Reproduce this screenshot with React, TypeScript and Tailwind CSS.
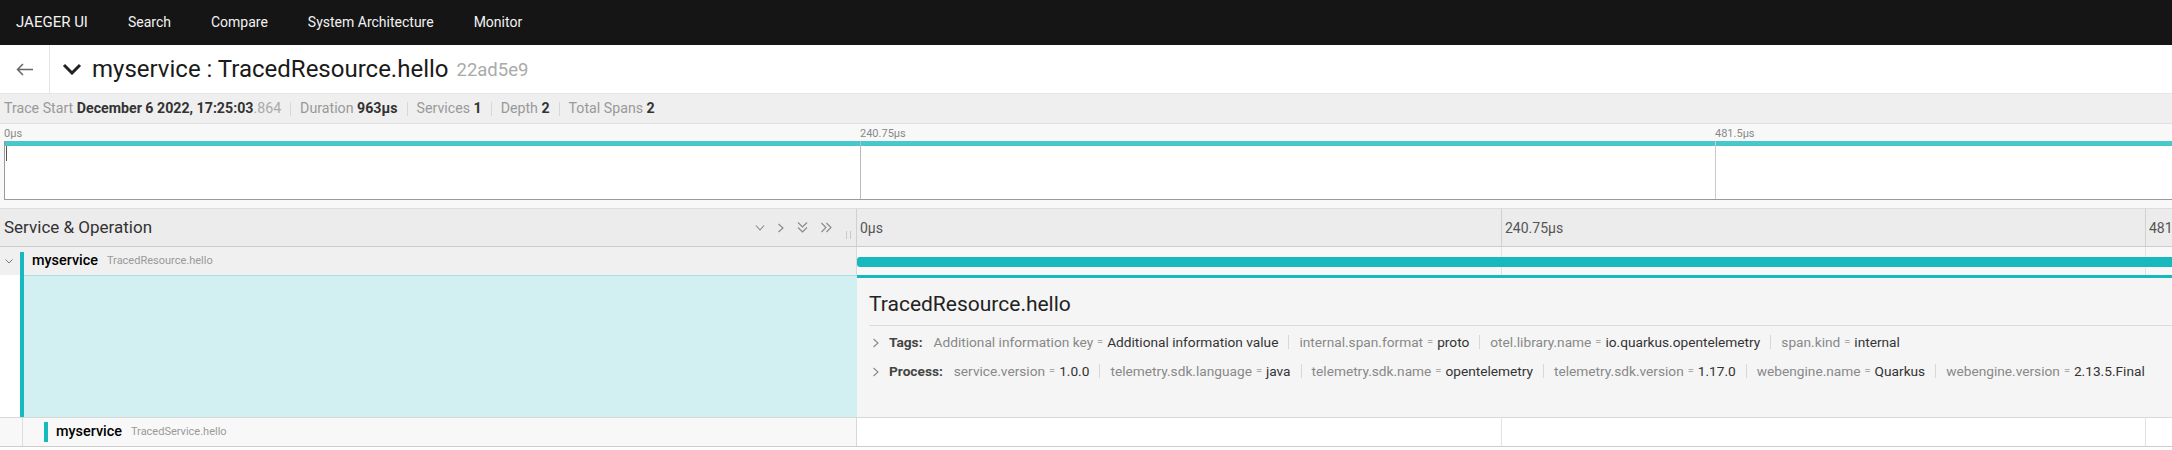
import React from "react";

const navItems = ["Search", "Compare", "System Architecture", "Monitor"];

const tags: [string, string][] = [
  ["Additional information key", "Additional information value"],
  ["internal.span.format", "proto"],
  ["otel.library.name", "io.quarkus.opentelemetry"],
  ["span.kind", "internal"],
];

const process: [string, string][] = [
  ["service.version", "1.0.0"],
  ["telemetry.sdk.language", "java"],
  ["telemetry.sdk.name", "opentelemetry"],
  ["telemetry.sdk.version", "1.17.0"],
  ["webengine.name", "Quarkus"],
  ["webengine.version", "2.13.5.Final"],
];

const Down = ({ className = "" }: { className?: string }) => (
  <svg width="10" height="6" viewBox="0 0 10 6" className={className} fill="none" stroke="currentColor" strokeWidth="1.1">
    <polyline points="1,0.5 5,5 9,0.5" />
  </svg>
);

const Right = ({ className = "" }: { className?: string }) => (
  <svg width="6" height="10" viewBox="0 0 6 10" className={className} fill="none" stroke="currentColor" strokeWidth="1.1">
    <polyline points="0.5,1 5,5 0.5,9" />
  </svg>
);

const DoubleDown = () => (
  <svg width="11" height="11" viewBox="0 0 11 11" fill="none" stroke="currentColor" strokeWidth="1.1">
    <polyline points="1,0.5 5.5,5 10,0.5" />
    <polyline points="1,5.5 5.5,10 10,5.5" />
  </svg>
);

const DoubleRight = () => (
  <svg width="11" height="11" viewBox="0 0 11 11" fill="none" stroke="currentColor" strokeWidth="1.1">
    <polyline points="0.5,1 5,5.5 0.5,10" />
    <polyline points="5.5,1 10,5.5 5.5,10" />
  </svg>
);

const Sep = () => <span className="mx-[9px] h-[14px] border-l border-[#d8d8d8]" />;

function KeyValues({ label, items }: { label: string; items: [string, string][] }) {
  return (
    <div className="flex h-[29px] items-center text-[13.7px]">
      <Right className="text-[#888]" />
      <span className="ml-[10px] font-bold text-[#444]">{label}</span>
      <div className="ml-[11px] flex items-center whitespace-nowrap">
        {items.map(([k, v], i) => (
          <React.Fragment key={k}>
            {i > 0 && <span className="mx-[10px] h-[14px] border-l border-[#d8d8d8]" />}
            <span className="text-[#888]">{k}</span>
            <span className="mx-[4px] text-[11px] text-[#aaa]">=</span>
            <span className="text-[#333]">{v}</span>
          </React.Fragment>
        ))}
      </div>
    </div>
  );
}

function Ticks({ color = "border-[#e2e2e2]" }: { color?: string }) {
  return (
    <>
      <div className={`absolute top-0 bottom-0 left-[644px] border-l ${color}`} />
      <div className={`absolute top-0 bottom-0 left-[1288px] border-l ${color}`} />
    </>
  );
}

export default function App() {
  return (
    <div className="w-[2172px] h-[450px] overflow-hidden bg-white font-[Roboto,sans-serif]">
      {/* top nav */}
      <nav className="flex h-[45px] items-center gap-10 bg-[#151515] pl-4 text-[14px] text-[#f2f2f2]">
        <span className="text-[15px]">JAEGER UI</span>
        {navItems.map((n) => (
          <span key={n}>{n}</span>
        ))}
      </nav>

      {/* trace title */}
      <div className="flex h-[49px] items-center border-b border-[#e6e6e6]">
        <div className="flex h-full w-[50px] items-center justify-center border-r border-[#e6e6e6] text-[#666]">
          <svg width="17" height="13" viewBox="0 0 17 13" fill="none" stroke="currentColor" strokeWidth="1.5">
            <path d="M17 6.5H1.5M7 1L1.5 6.5 7 12" />
          </svg>
        </div>
        <svg width="20" height="12" viewBox="0 0 20 12" className="ml-[12px]" fill="none" stroke="#222" strokeWidth="3">
          <polyline points="2,2 10,10 18,2" />
        </svg>
        <h1 className="ml-[10px] text-[24px] text-[#1a1a1a]">myservice : TracedResource.hello</h1>
        <span className="ml-[8px] mt-[3px] text-[18.5px] text-[#aaa]">22ad5e9</span>
      </div>

      {/* summary */}
      <div className="flex h-[30px] items-center border-b border-[#e0e0e0] bg-[#efefef] px-[4px] text-[14.2px] text-[#999]">
        <span>
          Trace Start <b className="text-[#333]">December 6 2022, 17:25:03</b>
          <span className="text-[#aaa]">.864</span>
        </span>
        <Sep />
        <span>
          Duration <b className="text-[#333]">963μs</b>
        </span>
        <Sep />
        <span>
          Services <b className="text-[#333]">1</b>
        </span>
        <Sep />
        <span>
          Depth <b className="text-[#333]">2</b>
        </span>
        <Sep />
        <span>
          Total Spans <b className="text-[#333]">2</b>
        </span>
      </div>

      {/* minimap */}
      <div className="bg-[#f8f8f8] pb-[8px] pl-[4px]">
        <div className="relative h-[17px] text-[11px] text-[#888]">
          <span className="absolute left-0 top-[2px]">0μs</span>
          <span className="absolute left-[856px] top-[2px]">240.75μs</span>
          <span className="absolute left-[1711px] top-[2px]">481.5μs</span>
        </div>
        <div className="relative h-[59px] border-b border-l border-[#9a9a9a] bg-white">
          <div className="h-[5px] bg-[#48c8cc]" />
          <div className="absolute top-0 bottom-0 left-[855px] border-l border-[#bbb]" />
          <div className="absolute top-0 bottom-0 left-[1710px] border-l border-[#ccc]" />
          <div className="absolute left-[1px] top-[5px] h-[15px] border-l border-[#555]" />
        </div>
      </div>

      {/* column header */}
      <div className="flex h-[39px] border-y border-t-[#dcdcdc] border-b-[#cccccc] bg-[#ececec]">
        <div className="flex w-[857px] items-center border-r border-[#d0d0d0] pl-[4px] pr-[5px]">
          <span className="text-[17px] text-[#333]">Service &amp; Operation</span>
          <div className="ml-auto flex items-center gap-[13px] text-[#888]">
            <Down />
            <Right />
            <DoubleDown />
            <DoubleRight />
          </div>
          <div className="ml-[14px] mt-[15px] flex h-[8px] gap-[3px]">
            <span className="border-l border-[#c8c8c8]" />
            <span className="border-l border-[#c8c8c8]" />
          </div>
        </div>
        <div className="relative flex-1 text-[14px] text-[#555]">
          <Ticks color="border-[#d0d0d0]" />
          <span className="absolute left-[3px] top-[9px]">0μs</span>
          <span className="absolute left-[648px] top-[9px]">240.75μs</span>
          <span className="absolute left-[1292px] top-[9px]">481.5μs</span>
        </div>
      </div>

      {/* span row 1 */}
      <div className="flex h-[28px]">
        <div className="flex w-[857px] items-stretch border-r border-[#d8d8d8] bg-[#f0f0f0]">
          <div className="flex w-[20px] items-center pl-[5px] text-[#777]">
            <svg width="8" height="5" viewBox="0 0 8 5" fill="none" stroke="currentColor" strokeWidth="1">
              <polyline points="0.5,0.5 4,4 7.5,0.5" />
            </svg>
          </div>
          <div className="mt-[5px] w-[4px] bg-[#17b8be]" />
          <div className="flex items-center pl-[8px]">
            <span className="text-[14.4px] font-medium text-black">myservice</span>
            <span className="ml-[9px] text-[11px] text-[#999]">TracedResource.hello</span>
          </div>
        </div>
        <div className="relative flex-1 bg-[#f8f8f8]">
          <Ticks />
          <div className="absolute left-0 right-0 top-[10px] h-[10px] rounded-l-[3px] bg-[#17b8be]" />
        </div>
      </div>

      {/* span detail */}
      <div className="flex h-[143px] border-b border-[#d8d8d8]">
        <div className="flex w-[857px]">
          <div className="w-[20px] bg-white" />
          <div className="w-[4px] bg-[#17b8be]" />
          <div className="flex-1 border-t border-[#a9dfe2] bg-[#d2f0f2]" />
        </div>
        <div className="flex-1 border-t-[3px] border-[#17b8be] bg-[#f5f5f5] pl-[12px] pt-[14px]">
          <div className="border-b border-[#dcdcdc] pb-[9px] text-[21px] leading-[24px] text-[#222]">
            TracedResource.hello
          </div>
          <div className="pl-[4px] pt-[2px]">
            <KeyValues label="Tags:" items={tags} />
            <KeyValues label="Process:" items={process} />
          </div>
        </div>
      </div>

      {/* span row 2 */}
      <div className="flex h-[29px] border-b border-[#cccccc]">
        <div className="flex w-[857px] items-stretch border-r border-[#d8d8d8] bg-[#f8f8f8]">
          <div className="w-[23px] border-r border-[#dddddd]" />
          <div className="flex items-center pl-[21px]">
            <span className="h-[20px] w-[4px] bg-[#17b8be]" />
            <span className="ml-[8px] text-[14.4px] font-medium text-black">myservice</span>
            <span className="ml-[9px] text-[11px] text-[#999]">TracedService.hello</span>
          </div>
        </div>
        <div className="relative flex-1 bg-white">
          <Ticks />
        </div>
      </div>
    </div>
  );
}
